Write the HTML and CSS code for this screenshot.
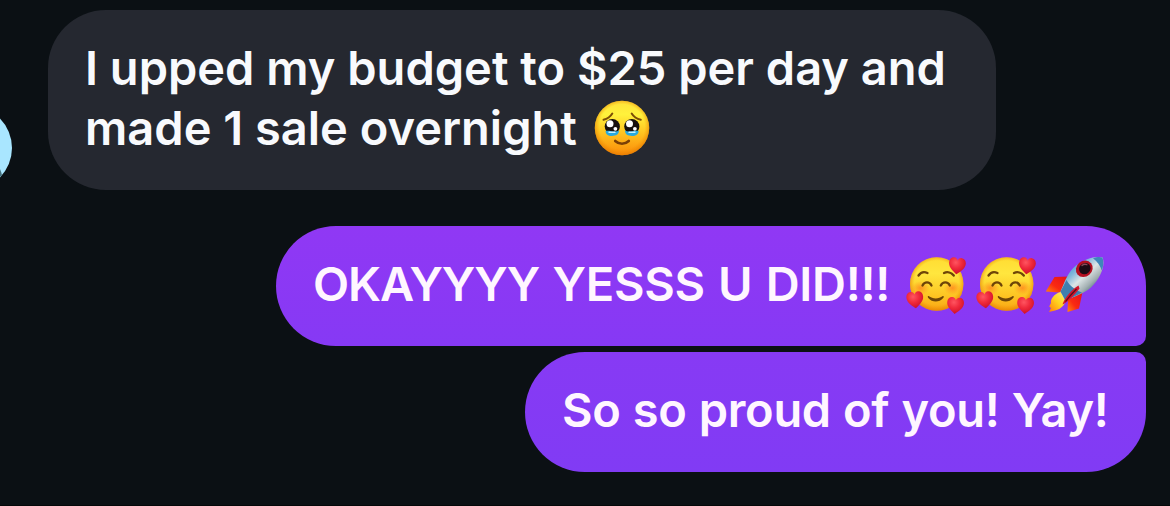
FILE: index.html
```html
<!DOCTYPE html>
<html lang="en">
<head>
    <title>Chat</title>
    <meta charset="UTF-8">
    <link rel="stylesheet" href="styles.css">
</head>
<body>
    <!-- shared gradients and emoji drawings -->
    <svg class="defs" width="0" height="0" aria-hidden="true">
        <defs>
            <linearGradient id="face" x1="0" y1="0" x2="0" y2="1">
                <stop offset="0" stop-color="#ffe23a"/>
                <stop offset="0.25" stop-color="#fff23c"/>
                <stop offset="0.6" stop-color="#ffc21f"/>
                <stop offset="1" stop-color="#fb8a08"/>
            </linearGradient>
            <radialGradient id="rim" cx="0.5" cy="0.48" r="0.52">
                <stop offset="0.8" stop-color="#f08a00" stop-opacity="0"/>
                <stop offset="1" stop-color="#e07800" stop-opacity="0.65"/>
            </radialGradient>
            <linearGradient id="loveFace" x1="0" y1="0" x2="0" y2="1">
                <stop offset="0" stop-color="#ffdc32"/>
                <stop offset="0.3" stop-color="#ffe63e"/>
                <stop offset="0.7" stop-color="#fdc624"/>
                <stop offset="1" stop-color="#f9a512"/>
            </linearGradient>
            <radialGradient id="blush">
                <stop offset="0" stop-color="#ff7a1c" stop-opacity="0.7"/>
                <stop offset="1" stop-color="#ff8a1c" stop-opacity="0"/>
            </radialGradient>
            <radialGradient id="heart" cx="0.4" cy="0.3" r="0.7">
                <stop offset="0" stop-color="#ff5560"/>
                <stop offset="0.5" stop-color="#f02a3c"/>
                <stop offset="1" stop-color="#cf1128"/>
            </radialGradient>
            <linearGradient id="hull" x1="0.15" y1="0.15" x2="0.75" y2="0.8">
                <stop offset="0" stop-color="#3c8fd0"/>
                <stop offset="0.3" stop-color="#7fb6dc"/>
                <stop offset="0.55" stop-color="#dde5e6"/>
                <stop offset="0.8" stop-color="#a3b0b2"/>
                <stop offset="1" stop-color="#4f6f86"/>
            </linearGradient>
            <linearGradient id="fin" x1="1" y1="0" x2="0" y2="1">
                <stop offset="0" stop-color="#e3101c"/>
                <stop offset="0.6" stop-color="#fa2a12"/>
                <stop offset="1" stop-color="#ff8a10"/>
            </linearGradient>
            <linearGradient id="flame" x1="1" y1="0" x2="0" y2="1">
                <stop offset="0" stop-color="#fff27a"/>
                <stop offset="0.5" stop-color="#ffd21e"/>
                <stop offset="1" stop-color="#ff7a0a"/>
            </linearGradient>
            <path id="heartShape" d="M0 9 C-3 6.5 -8.4 3 -8.4 -2.2 C-8.4 -5.6 -6.2 -7.6 -3.8 -7.6 C-2 -7.6 -0.6 -6.6 0 -4.8 C0.6 -6.6 2 -7.6 3.8 -7.6 C6.2 -7.6 8.4 -5.6 8.4 -2.2 C8.4 3 3 6.5 0 9 Z"/>
            <symbol id="love" viewBox="0 0 60 60">
                <circle cx="30.7" cy="30" r="26.7" fill="url(#loveFace)"/>
                <circle cx="30.7" cy="30" r="26.7" fill="url(#rim)"/>
                <ellipse cx="14.5" cy="34" rx="9" ry="7" fill="url(#blush)"/>
                <ellipse cx="46.5" cy="34" rx="9" ry="7" fill="url(#blush)"/>
                <g fill="none" stroke="#6e4508" stroke-width="2.3" stroke-linecap="round">
                    <path d="M12.5 21.5 C14.5 18.5 18 17.3 21.5 19"/>
                    <path d="M38 19 C41.5 17.3 45.5 18.5 47.8 21.5"/>
                    <path d="M16.5 31.5 C18.5 27.4 23.5 27.4 25.5 31.5"/>
                    <path d="M34.8 31.5 C36.8 27.4 41.8 27.4 43.8 31.5"/>
                </g>
                <path d="M22.6 42 C27 45.2 32.5 45.2 36.8 42 C38 41.5 38 43 37.2 44 C33.5 48.8 26 48.8 22.3 44 C21.4 42.8 21.7 41.5 22.6 42 Z" fill="#6e4508"/>
                <g fill="url(#heart)">
                    <use href="#heartShape" transform="translate(51.2 11.3) rotate(6)"/>
                    <use href="#heartShape" transform="translate(9 45.2) rotate(-6)"/>
                    <use href="#heartShape" transform="translate(49.4 51) rotate(5)"/>
                </g>
            </symbol>
        </defs>
    </svg>

    <div class="chat">
        <div class="row received">
            <svg class="avatar" viewBox="0 0 84 84" aria-hidden="true">
                <circle cx="42" cy="42" r="42" fill="#a9e6ff"/>
                <path d="M70 60 C72 62 73.5 66 74 69.3 L68 74 Z" fill="#44707c"/>
            </svg>
            <div class="bubble bubble-in">
                <div class="line line-1">I upped my budget to $25 per day and</div>
                <div class="line line-2">
                    <span>made 1 sale overnight</span>
                    <svg class="emoji" viewBox="0 0 60 60" role="img" aria-label="face holding back tears">
                        <circle cx="30" cy="30" r="27.2" fill="url(#face)"/>
                        <circle cx="30" cy="30" r="27.2" fill="url(#rim)"/>
                        <g fill="none" stroke="#7b4d06" stroke-width="2" stroke-linecap="round">
                            <path d="M11.5 21.8 C15.5 21 18.5 18.7 20.3 15.6"/>
                            <path d="M39.7 15.6 C41.5 18.7 44.8 21 48.8 21.8"/>
                        </g>
                        <circle cx="20.3" cy="28.6" r="7.6" fill="#17100e"/>
                        <circle cx="39.8" cy="28.6" r="7.6" fill="#17100e"/>
                        <circle cx="18" cy="25.8" r="3.5" fill="#fff"/>
                        <circle cx="37.5" cy="25.8" r="3.5" fill="#fff"/>
                        <circle cx="23.4" cy="30.8" r="1.9" fill="#fff"/>
                        <circle cx="42.9" cy="30.8" r="1.9" fill="#fff"/>
                        <path d="M13.6 33 C17 31.8 23 35 27 32.6 C27 36.5 24 38 20 38 C16 38 13.6 36.5 13.6 33 Z" fill="#28a9de"/>
                        <path d="M33 32.6 C37 35 43 31.8 46.6 33 C46.6 36.5 44 38 40 38 C36 38 33 36.5 33 32.6 Z" fill="#28a9de"/>
                        <path d="M17 34.2 H23 M37 34.2 H43" stroke="#c7f1ff" stroke-width="1.4" stroke-linecap="round"/>
                        <path d="M23.2 43 C27 46.6 33 46.6 36.8 43" fill="none" stroke="#7b3f06" stroke-width="2.6" stroke-linecap="round"/>
                    </svg>
                </div>
            </div>
        </div>

        <div class="row sent">
            <div class="bubble bubble-out first">
                <div class="line line-3">
                    <span><span class="tight">OKAYYYY</span> YESSS U DID!!!</span>
                    <svg class="emoji" role="img" aria-label="smiling face with hearts"><use href="#love"/></svg>
                    <svg class="emoji" role="img" aria-label="smiling face with hearts"><use href="#love"/></svg>
                    <svg class="emoji" viewBox="0 0 60 60" role="img" aria-label="rocket">
                        <path d="M24 22.5 L9.5 23 L0.8 37.5 L17.5 38.8 Z" fill="url(#fin)"/>
                        <path d="M23 46 L22.5 58 L34 54.5 L37.5 38 Z" fill="url(#fin)"/>
                        <path d="M15.5 38 C9 39.5 5 46 6 49 L4.2 52.5 L6 54 L4 58 L10 56.5 C17 55 21 49.5 21 44 Z" fill="url(#flame)"/>
                        <path d="M57.5 3.5 C60.5 11 56 24 46 33.5 C39 39.8 29.5 42.5 20 46 L15.5 37.5 C20 27 23 18 31 11.5 C39.5 4.5 51 1.5 57.5 3.5 Z" fill="url(#hull)"/>
                        <path d="M57.5 3.5 C59 8 58.3 12.5 56.8 16.5 C55.5 12 52.5 7.5 48 4.2 C52 2.8 55 2.7 57.5 3.5 Z" fill="#3f87ba"/>
                        <path d="M21.5 26 C25 32 30 36 37 38.5 C31.5 42 26 44 20 46 L15.5 37.5 Z" fill="#3f7fae"/>
                        <path d="M33.5 31.5 L34.5 34.5 C30 40 24 47.5 17.5 50.5 C20 43 26.5 36 33.5 31.5 Z" fill="#d3142c"/>
                        <path d="M31.5 35 C27 39.5 23.5 43.5 20.5 47.5" fill="none" stroke="#561018" stroke-width="1.2"/>
                        <ellipse cx="39.3" cy="14.8" rx="8.8" ry="7.8" transform="rotate(-40 39.3 14.8)" fill="#b51022"/>
                        <ellipse cx="39.8" cy="14.6" rx="6" ry="5.5" transform="rotate(-40 39.8 14.6)" fill="#1c0b14"/>
                        <path d="M37 11.5 C38.5 10.2 40.5 10 42 10.8" fill="none" stroke="#8a4a5a" stroke-width="1.3" stroke-linecap="round"/>
                    </svg>
                </div>
            </div>
            <div class="bubble bubble-out last">
                <div class="line line-4">So so proud of you! Yay!</div>
            </div>
        </div>
    </div>
</body>
</html>
```
FILE: styles.css
```css
body {
    margin: 0;
    background-color: #0b1014;
    font-family: Inter, "Liberation Sans", sans-serif;
    overflow: hidden;
}
.defs {
    display: block;
}
.chat {
    box-sizing: border-box;
    height: 506px;
    padding: 10px 24px 0 0;
    border-bottom: 1px solid #050809;
}
.row {
    display: flex;
}
.received {
    align-items: flex-end;
    gap: 36px;
    margin-left: -72px;
    margin-bottom: 36px;
}
.sent {
    flex-direction: column;
    align-items: flex-end;
    gap: 6px;
}
.avatar {
    flex: none;
    width: 84px;
    height: 84px;
}
.bubble {
    box-sizing: border-box;
    padding: 28px 36px 32px 37px;
    border-radius: 58px;
    font-size: 47px;
    font-weight: 600;
    line-height: 60px;
    color: #f8fafd;
}
.bubble-in {
    width: 948px;
    background-color: #252830;
}
.bubble-out {
    color: #fff6ff;
}
.first {
    width: 870px;
    border-radius: 60px 60px 10px 60px;
    background: linear-gradient(#9038f4, #8639f4);
}
.last {
    width: 621px;
    border-radius: 60px 10px 60px 60px;
    background: linear-gradient(#873af4, #813bf4);
}
.line {
    display: flex;
    height: 60px;
    white-space: nowrap;
}
.line-3 {
    letter-spacing: -0.3px;
    word-spacing: 1.8px;
}
.line-4 {
    letter-spacing: -0.3px;
    word-spacing: 0.6px;
}
.tight {
    letter-spacing: -1.1px;
}
.emoji {
    flex: none;
    width: 60px;
    height: 60px;
}
.line-2 .emoji {
    margin-left: 15px;
}
.line-3 .emoji {
    margin-left: 9.5px;
}
.line-3 span + .emoji {
    margin-left: 16px;
}
```
